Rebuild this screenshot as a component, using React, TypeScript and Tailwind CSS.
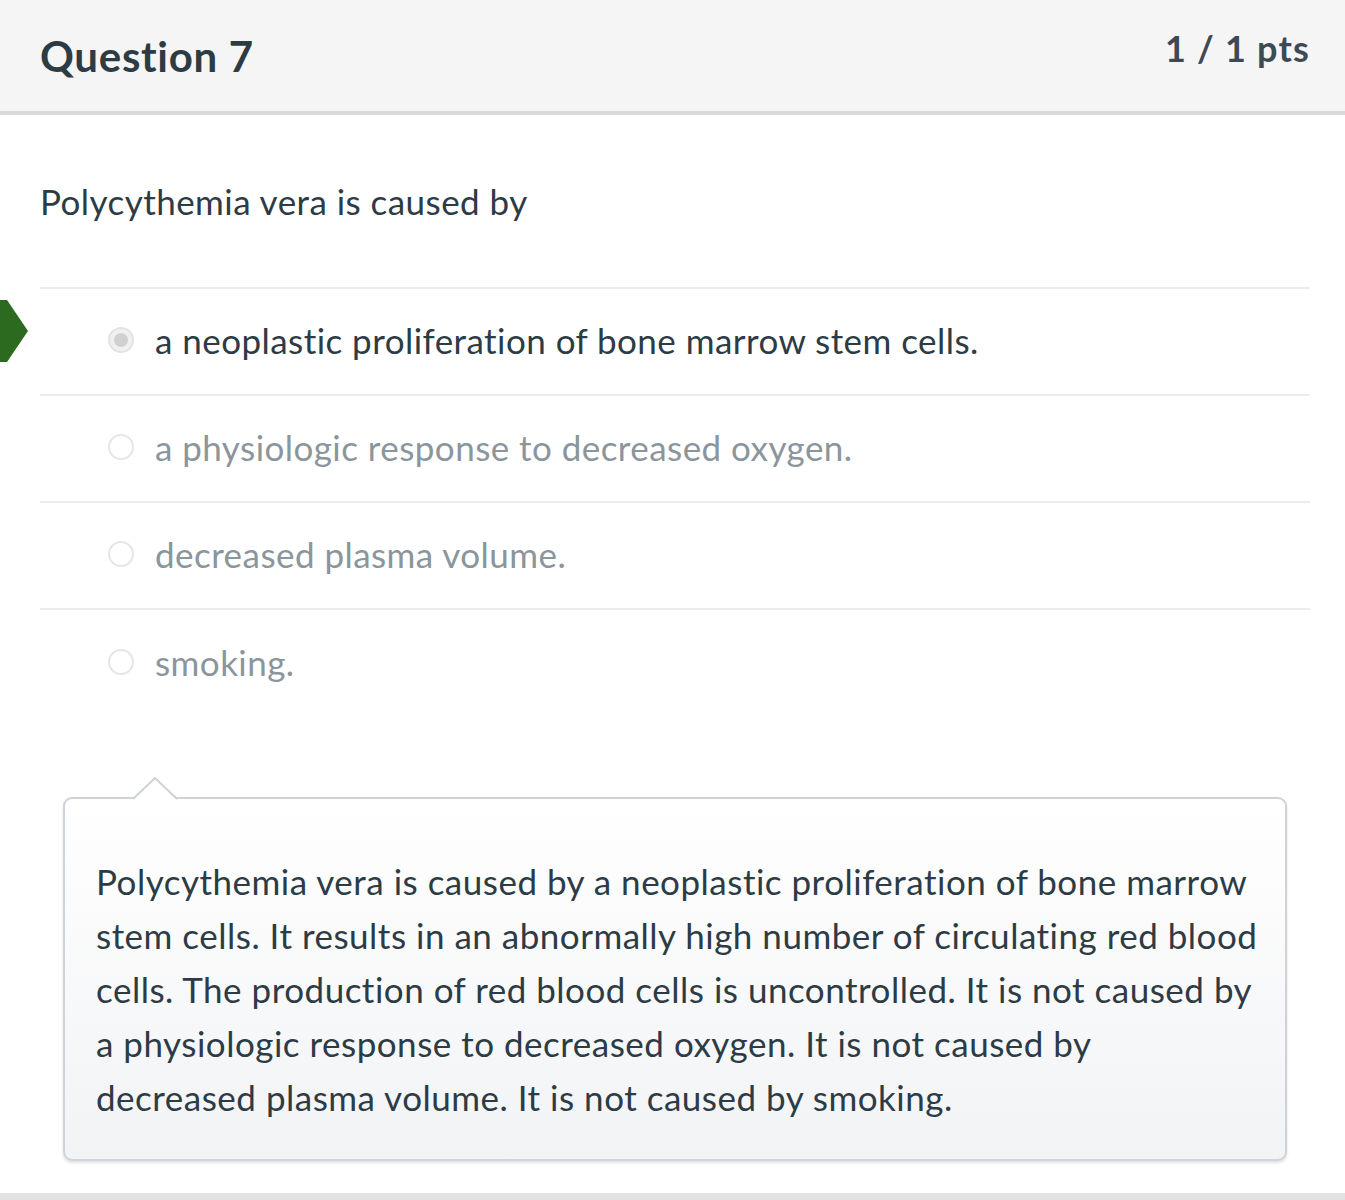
const answers = [
  { text: "a neoplastic proliferation of bone marrow stem cells.", chosen: true },
  { text: "a physiologic response to decreased oxygen.", chosen: false },
  { text: "decreased plasma volume.", chosen: false },
  { text: "smoking.", chosen: false },
];

function Radio({ checked }: { checked: boolean }) {
  return (
    <span
      className={
        "w-[26px] h-[26px] rounded-full shrink-0 flex items-center justify-center border-2 " +
        (checked ? "border-[#e3e3e3] bg-[#f0f0f0]" : "border-[#e6e6e6] bg-white")
      }
    >
      {checked && <span className="w-[14px] h-[14px] rounded-full bg-[#d0d0d0]" />}
    </span>
  );
}

export default function App() {
  return (
    <div className="w-[1345px] h-[1200px] bg-white flex flex-col text-[#2d3b45] font-['Lato','Noto_Sans',sans-serif] overflow-hidden">
      {/* Header */}
      <div className="h-[115px] shrink-0 bg-[#f5f5f5] border-b-[4px] border-[#d8dadc] flex justify-between pl-[40px] pr-[35px]">
        <h2 className="text-[42px] font-bold leading-none mt-[35px] tracking-[0.7px]">Question 7</h2>
        <span className="text-[36px] font-bold leading-none mt-[30px] tracking-[1.2px] text-[#3d4a54]">1 / 1 pts</span>
      </div>

      {/* Question text */}
      <p className="text-[35px] leading-none mx-[40px] mt-[69px] tracking-[0.45px]">
        Polycythemia vera is caused by
      </p>

      {/* Answers */}
      <div className="mx-[40px] mt-[68px] border-t-2 border-[#ececec] w-[1270px]">
        {answers.map((a, i) => (
          <div
            key={i}
            className={
              "relative h-[107px] flex items-center pl-[68px] pb-[3px] gap-[21px] " +
              (i < answers.length - 1 ? "border-b-2 border-[#ececec]" : "")
            }
          >
            {a.chosen && (
              <svg
                className="absolute left-[-40px] top-[11px]"
                width="28"
                height="62"
                viewBox="0 0 28 62"
              >
                <polygon points="0,0 7,0 28,31 7,62 0,62" fill="#2b6a1f" />
              </svg>
            )}
            <Radio checked={a.chosen} />
            <span
              className={
                "text-[35px] leading-none tracking-[0.45px] " +
                (a.chosen ? "text-[#2d3b45]" : "text-[#8b959c]")
              }
            >
              {a.text}
            </span>
          </div>
        ))}
      </div>

      {/* Comment */}
      <div className="relative mx-[63px] mt-[80px] w-[1224px] h-[364px] rounded-[9px] border-2 border-[#cdd3d8] bg-gradient-to-b from-white to-[#f2f3f5] shadow-[0_2px_3px_rgba(0,0,0,0.12)] pl-[31px] pt-[55px]">
        <svg className="absolute left-[68px] top-[-22px]" width="46" height="24" viewBox="0 0 46 24">
          <polygon points="0,23 22,1 44,23" fill="#ffffff" />
          <polyline points="0,22 22,1 44,22" fill="none" stroke="#cdd3d8" strokeWidth="2" />
        </svg>
        <p className="text-[35px] leading-[54px] tracking-[0.5px]">
          Polycythemia vera is caused by a neoplastic proliferation of bone marrow
          <br />
          stem cells. It results in an abnormally high number of circulating red blood
          <br />
          cells. The production of red blood cells is uncontrolled. It is not caused by
          <br />
          a physiologic response to decreased oxygen. It is not caused by
          <br />
          decreased plasma volume. It is not caused by smoking.
        </p>
      </div>

      <div className="flex-1" />
      <div className="h-[7px] bg-[#e2e2e2] shrink-0" />
    </div>
  );
}
